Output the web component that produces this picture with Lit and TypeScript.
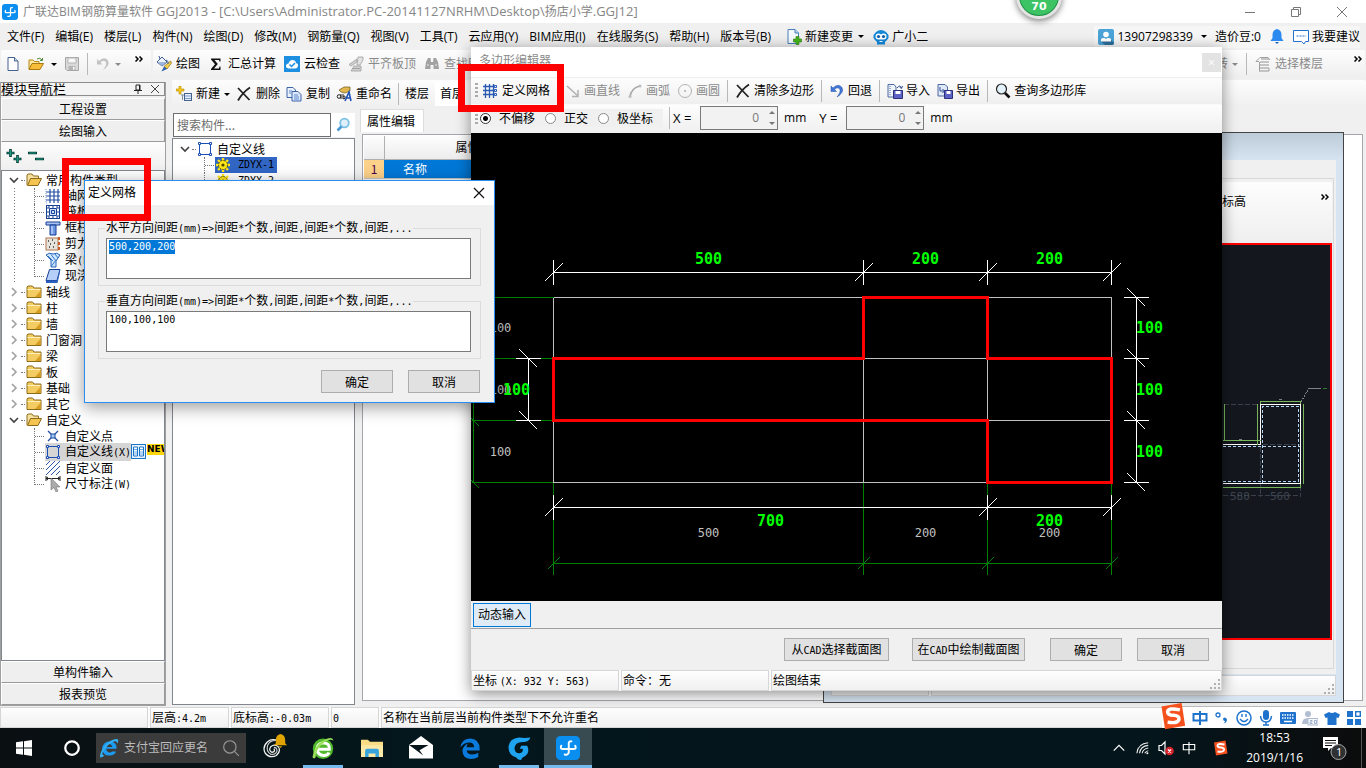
import { LitElement, html, svg, css, nothing, TemplateResult } from "lit";
import { customElement, query, state } from "lit/decorators.js";
import { classMap } from "lit/directives/class-map.js";

type Art = ReturnType<typeof svg>;

const pic = (art: Art, w = 16, h = w, box = "0 0 16 16") =>
  html`<svg class="pic" width=${w} height=${h} viewBox=${box} aria-hidden="true">${art}</svg>`;

/** Mixed text: Latin runs are set in the half-width face. */
const mix = (text: string) =>
  text.split(/([\x21-\x7e][\x20-\x7e]*)/).map((part, i) =>
    i % 2 ? html`<span class="hw">${part}</span>` : part
  );

const ART: Record<string, Art> = {
  app: svg`<rect width="16" height="16" rx="3" fill="#0a8ef0"/><path d="M8.500 11.200V5Q8.500 3.300 10.300 3.600M3.500 6.500Q2.500 8.700 4.700 8.700H12Q13.800 8.500 12.800 6.500M8.500 10.500Q8.300 13 5.800 12.300" fill="none" stroke="#fff" stroke-width="1.300" stroke-linecap="round"/>`,
  page: svg`<path d="M3 1.500H9.500L13 5V14.500H3Z" fill="#fff" stroke="#44618f"/><path d="M9.500 1.500V5H13" fill="#cfe0f5" stroke="#44618f"/>`,
  open: svg`<path d="M1 13V4H5L6.500 5.500H11V8" fill="#ffe9a0" stroke="#b98714"/><path d="M1 13.500L4 7.500H15.500L12 13.500Z" fill="#f6bd3b" stroke="#a97a10"/><path d="M9 3Q12 1 14 4M14.500 2V4.500H12" fill="none" stroke="#4a8d3a"/>`,
  save: svg`<path d="M1.500 1.500H14.500V14.500H3L1.500 13Z" fill="#d9d9d9" stroke="#a7a7a7"/><path d="M4 2H12V7H4Z" fill="#f8f8f8" stroke="#b4b4b4"/><path d="M4.500 10H11.500V14H4.500Z" fill="#b4b4b4"/><path d="M9 11H10.500V13.500H9Z" fill="#fff"/>`,
  undoGrey: svg`<path d="M2 3V8.500H7.500L5.500 6.500Q8 3.500 10.500 5.500Q12.500 8.500 8 14Q15.500 9.500 13 4.500Q9 0 4 5Z" fill="#c3c3c3"/>`,
  undo: svg`<path d="M2 3V8.500H7.500L5.500 6.500Q8 3.500 10.500 5.500Q12.500 8.500 8 14Q15.500 9.500 13 4.500Q9 0 4 5Z" fill="#4077d8" stroke="#2450a4" stroke-width=".5"/>`,
  paint: svg`<path d="M1 6L6 1L11 6L6 10Z" fill="#eef3fb" stroke="#3f5f94"/><path d="M2 6H10L6 10Z" fill="#9bb7df"/><path d="M4 3L3 0" stroke="#3f5f94"/><path d="M14.500 5L8 10.500L11 13L15.500 7Z" fill="#f1cf4d" stroke="#8a6b16" stroke-width=".7"/><path d="M8 10.500L5.500 15.500L11 13Z" fill="#2d5fae"/><path d="M10 4Q13 5 12 8" stroke="#3f5f94" fill="none"/>`,
  sigma: svg`<path d="M3 2.500H12.500V5.500H11.500L11 4H6.500L9.800 8L6 12.500H11L11.500 10.500H12.500V14H3V13L7 8.300L3 3.500Z" fill="#111"/>`,
  cloud: svg`<rect width="16" height="16" fill="#1c8fe0"/><path d="M4.500 12.500Q1.500 12 2 9.300Q2.500 7.500 4.500 7.500Q5.500 4 8.500 4Q11.500 4 12 7Q14.500 7.500 14 10Q13.500 12.500 11 12.500Z" fill="#fff"/><path d="M5.500 8.500L7.500 10.500L11 7" fill="none" stroke="#1c8fe0" stroke-width="1.500"/>`,
  align: svg`<path d="M1 8.500L9 3V6L3 10ZM6 10H13V15H3Z" fill="#d0d0d0" stroke="#a0a0a0" stroke-width=".8"/><path d="M10 1H15V4L12 9H9Z" fill="#e2e2e2" stroke="#a0a0a0" stroke-width=".8"/><path d="M5 12.500H12" stroke="#a0a0a0"/>`,
  find: svg`<path d="M2 6L4 2H6.500L7 6H9L9.500 2H12L14 6L15 13H9.500V9H6.500V13H1Z" fill="#a2a2a2"/><path d="M3 9H5M11 9H13" stroke="#e9e9e9"/>`,
  stack: svg`<path d="M6 3H14M5 6H14M4 9H14M4 12H14M4 15H14" stroke="#b4b4b4" stroke-width="1.600"/><path d="M5 1.500H13L15 4M1 5.500L5 1.500M1 5.500H4M4.500 6V15M14 12V15" fill="none" stroke="#a0a0a0"/>`,
  pageAdd: svg`<path d="M2 .5H9L12.500 4V14.500H2Z" fill="#f5faff" stroke="#4a7fb8"/><path d="M9 .5V4H12.500" fill="#bcdcf5" stroke="#4a7fb8"/><path d="M10 7.500H13V10H15.500V13H13V15.500H10V13H7.500V10H10Z" fill="#46b51d" stroke="#2d7c12" stroke-width=".6"/>`,
  robot: svg`<path d="M3 3Q8 -1 13 3L15.500 6V9L14 11L12 13V15.500H4V13L2 11L.5 9V6Z" fill="#1488d8"/><path d="M2.500 7.500Q2.500 4.500 5.500 4.500Q7 4.500 8 5.500Q9 4.500 10.500 4.500Q13.500 4.500 13.500 7.500Q13.500 10.500 10.500 10.500H5.500Q2.500 10.500 2.500 7.500Z" fill="#fff"/><circle cx="5.500" cy="7.500" r="1.600" fill="#0f5fa8"/><circle cx="10.500" cy="7.500" r="1.600" fill="#0f5fa8"/><path d="M6.500 12.500H9.500" stroke="#fff"/>`,
  user: svg`<rect width="16" height="16" rx="2" fill="#4ba3d8"/><path d="M13 11L16 13.500V14Q16 16 14 16H7L3 12.500Z" fill="#2d6f9b"/><circle cx="8" cy="5.500" r="2.800" fill="#fff"/><path d="M3 12.500V10.500Q3 9 5 9H6.500L8 10L9.500 9H11Q13 9 13 10.500V12.500Z" fill="#fff"/>`,
  bell: svg`<path d="M8 0Q12.500 1 12.500 6V9L14.500 12H1.500L3.500 9V6Q3.500 1 8 0Z" fill="#2a8af0"/><path d="M6 13H10L8 15Z" fill="#1b62b8"/>`,
  bubble: svg`<path d="M.5 1.500H15.500V12.500H12.500L11 15L8.500 12.500H.5Z" fill="#fff" stroke="#2470d0"/><path d="M3.500 7H13" stroke="#2470d0" stroke-dasharray="2 1"/>`,
  add: svg`<path d="M3 0H5V3H8V5H5V8H3V5H0V3H3Z" fill="#ffc91c" stroke="#b38a00" stroke-width=".6"/><path d="M5 9H8M6.500 9V14" stroke="#7c8ca5" fill="none"/><rect x="8.500" y="7.500" width="7" height="7" fill="#e7effc" stroke="#44618f"/><path d="M9 10H15M9 12.500H15" stroke="#7b9acb"/>`,
  cross: svg`<path d="M2 2L13.500 14M14 1.500Q7 6 2 14.500" fill="none" stroke="#222" stroke-width="1.800"/>`,
  copy: svg`<path d="M1 1.500H7L9.500 4V11.500H1Z" fill="#eaf2ff" stroke="#3d62a8"/><path d="M6 5.500H12L15 8.500V15H6Z" fill="#dbe8ff" stroke="#3d62a8"/><path d="M8 9H12M8 11H13M8 13H13M3 5H6M3 7H5" stroke="#5c86cc"/>`,
  rename: svg`<path d="M3 4L8 1H14V5L9 7L5 6Z" fill="#e1b64c" stroke="#6f5a1c" stroke-width=".7"/><circle cx="3" cy="10.500" r="1.800" fill="none" stroke="#222"/><path d="M5 8V13M7 8V13M7 10.500Q9.500 9 9 12Q8 13.500 7 12.500" fill="none" stroke="#222"/><path d="M9 15L13 6L15 15M10 12H14.500" fill="none" stroke="#1f52b5" stroke-width="1.600"/>`,
  lens: svg`<circle cx="6.500" cy="6" r="5" fill="#e4f2fb" stroke="#222" stroke-width="1.200"/><path d="M10 10L14.500 14.500" stroke="#111" stroke-width="2.600"/>`,
  search: svg`<circle cx="9.500" cy="6" r="4.300" fill="#dff0fa" stroke="#7cc0e6" stroke-width="1.800"/><path d="M6.500 9.500L2.500 13.500" stroke="#4c9bd4" stroke-width="2.600"/>`,
  grid: svg`<path d="M3.500 1V15M7.500 1V15M11.500 1V15M1 3.500H13M1 7.500H13M1 11.500H13" stroke="#2a5bb2" stroke-width="1.300"/><path d="M12.500 2.500H14.500V4.500H12.500ZM12.500 6.500H14.500V8.500H12.500ZM12.500 10.500H14.500V12.500H12.500Z" fill="#fff" stroke="#2a5bb2"/>`,
  line: svg`<path d="M2 3L13 13M13 7V13.500H7" fill="none" stroke="#b1b1b1" stroke-width="1.500"/>`,
  arc: svg`<path d="M3 14Q4 5 13 3" fill="none" stroke="#a7a7a7" stroke-width="1.500"/><circle cx="3" cy="13.500" r="1.500" fill="#bbb"/><circle cx="13" cy="3" r="1.500" fill="#bbb"/>`,
  circle: svg`<circle cx="8" cy="8" r="6.500" fill="none" stroke="#b1b1b1"/><circle cx="8" cy="8" r="1" fill="#b1b1b1"/>`,
  importer: svg`<path d="M1 1.500H7L9 4V14H1Z" fill="#eef3fc" stroke="#4c68a0"/><path d="M3 3V12" stroke="#4c68a0" stroke-dasharray="1 1"/><path d="M6.500 7.500H15.500V15.500H6.500Z" fill="#5b62c4" stroke="#2c2f7a"/><path d="M8.500 8H13.500V11H8.500Z" fill="#fff"/><path d="M10 5Q13 1 14.500 5M15.500 3L14.500 5.500L12.500 4" fill="none" stroke="#2f4f90"/>`,
  exporter: svg`<path d="M1 1.500H8L10.500 4V13H1Z" fill="#dfe8f8" stroke="#4c68a0"/><path d="M3 4V8H7M5.500 6L7.500 8L5.500 10" fill="none" stroke="#2f4f90"/><path d="M7.500 7.500H15.500V15.500H7.500Z" fill="#5b62c4" stroke="#2c2f7a"/><path d="M9.500 8H13.500V11H9.500Z" fill="#fff"/>`,
  folder: svg`<path d="M1 13.500V3L2 2H6.500L8 4H15V13.500Z" fill="#f3cd62" stroke="#8c6a1a"/><path d="M1.500 5.500H14.500" stroke="#fff1bd"/><path d="M9 13L14.500 7V13Z" fill="#d99d22"/>`,
  folderOpen: svg`<path d="M1 13V3L2 2H6L7.500 4H12.500V6.500" fill="#f6e2a0" stroke="#8c6a1a"/><path d="M1.500 13.500L4.500 6.500H15.500L12 13.500Z" fill="#f3c550" stroke="#8c6a1a"/>`,
  axis: svg`<path d="M5 1V15M9 1V15M13 1V15M1 4H15M1 8H15M1 12H15" stroke="#244ea0" stroke-width="1.200"/><path d="M1 1V15H3" fill="none" stroke="#7c9bd4" stroke-dasharray="1 1"/>`,
  raft: svg`<rect x="1.500" y="1.500" width="13" height="13" fill="#fff" stroke="#173f93"/><path d="M4.500 4.500H11.500V11.500H4.500Z" fill="#cfe0fb" stroke="#173f93"/><path d="M6.500 6.500H9.500V9.500H6.500ZM1.500 4H4M1.500 8H4M1.500 12H4M12 4H14M12 8H14M12 12H14M4 2V4M8 2V4M12 2V4M4 12V14M8 12V14M12 12V14" fill="none" stroke="#173f93"/>`,
  column: svg`<path d="M1 2H15V5H1Z" fill="#aac4f2" stroke="#173f93"/><path d="M5 5H11V15H5Z" fill="#6e98e6" stroke="#173f93"/><path d="M7 6V14" stroke="#dce9ff"/>`,
  wall: svg`<rect x="1" y="2" width="12" height="12" fill="#e6e2dc" stroke="#b0764e"/><path d="M3 5H4M7 4H8M5 8H6M9 7H10M4 11H5M8 11H9" stroke="#333" stroke-width="1.400"/><path d="M14 1V15" stroke="#c85b2c" stroke-dasharray="3 2" stroke-width="2"/>`,
  beam: svg`<path d="M1 3Q4 0 8 2Q12 0 15 3L11 9V15H6V8Z" fill="#cfe3fb" stroke="#2463b8"/><path d="M3 4L8 9M6 2.500L11 9M10 2L13 6M6.500 14L11 8" stroke="#2f7cd2"/>`,
  slab: svg`<path d="M4.500 1.500H15L12 12.500H1Z" fill="#b5cff8" stroke="#173f93"/><path d="M1 12.500H12L15 1.500V4L12.500 15H1Z" fill="#2c5fc0"/>`,
  point: svg`<path d="M3 3L6.500 6.500M13 3L9.500 6.500M3 13L6.500 9.500M13 13L9.500 9.500" stroke="#244ea0" stroke-width="1.300"/><rect x="6" y="6" width="4" height="4" fill="#9fc8f5" stroke="#244ea0"/>`,
  box: svg`<rect x="2.500" y="2.500" width="11" height="11" fill="none" stroke="#1a4fb5"/><path d="M1.500 1.500H3.500V3.500H1.500ZM12.500 1.500H14.500V3.500H12.500ZM1.500 12.500H3.500V14.500H1.500ZM12.500 12.500H14.500V14.500H12.500Z" fill="#fff" stroke="#1a4fb5"/>`,
  hatch: svg`<path d="M1 5L5 1M1 10L10 1M1 15L15 1M6 15L15 6M11 15L15 11" stroke="#2a56ad"/>`,
  dims: svg`<path d="M1 0V5M15 0V5M1 2.500H15M3 1L1 2.500L3 4M13 1L15 2.500L13 4" stroke="#222" fill="none"/><path d="M6 2V14L9 11.500L11 16L13 15L11 11H15Z" fill="#ababab" stroke="#777" stroke-width=".6"/>`,
  gear: svg`<path d="M8 1V15M1 8H15M3 3L13 13M13 3L3 13" stroke="#ffe71a" stroke-width="2.400"/><circle cx="8" cy="8" r="4.500" fill="#ffe71a" stroke="#5d5300" stroke-dasharray="2 1"/><circle cx="8" cy="8" r="1.600" fill="#4d4400"/>`,
  book: svg`<rect x=".5" y=".5" width="14" height="14" fill="#e8f3ff" stroke="#1c74c8"/><path d="M2.500 3H6.500V12H2.500ZM8.500 3H12.500V12H8.500Z" fill="#fff" stroke="#1c74c8"/><path d="M3 5.500H6M3 8H6M3 10H6M9 5.500H12M9 8H12M9 10H12" stroke="#67a8e8"/>`,
  sogou: svg`<path d="M2 2.500L13.500 .5L15.500 13.500L4 15.500Z" fill="#f4511e"/><path d="M12.500 4.500Q6 3 5.500 5.500Q5.500 7.500 9 7.500Q12.500 8 12 10Q11 12.500 5.500 11.500" fill="none" stroke="#fff" stroke-width="2"/>`,
  zhong: svg`<path d="M1.500 4H14.500V10.500H1.500ZM8 1V15" fill="none" stroke="currentColor" stroke-width="2"/>`,
  zhongThin: svg`<path d="M1.500 4H14.500V10H1.500ZM8 1V15" fill="none" stroke="currentColor" stroke-width="1.300"/>`,
  comma: svg`<circle cx="4" cy="5" r="2" fill="none" stroke="currentColor" stroke-width="1.300"/><path d="M9 9Q9 7.500 11 7.500Q13 8 13 10Q12.500 13 9.500 13.500Q11 12 11 11Q9 11 9 9Z" fill="currentColor"/>`,
  smile: svg`<circle cx="8" cy="8" r="7" fill="none" stroke="currentColor" stroke-width="1.500"/><path d="M6 4V7M10 4V7M4 9Q8 14 12 9" fill="none" stroke="currentColor" stroke-width="1.400"/>`,
  mic: svg`<rect x="5" y="0" width="6" height="10" rx="3" fill="currentColor"/><path d="M2.500 6Q3 12 8 12Q13 12 13.500 6M8 12V15M5 15H11" fill="none" stroke="currentColor" stroke-width="1.500"/>`,
  keys: svg`<rect x="0" y="2" width="16" height="12" rx="1" fill="currentColor"/><path d="M2 5H14M2 8H14" stroke="#fff" stroke-width="1.500" stroke-dasharray="1.500 1"/><path d="M4 11.500H12" stroke="#fff" stroke-width="1.500"/>`,
  person: svg`<circle cx="6" cy="4" r="3" fill="#b0bdd2"/><path d="M0 14Q0 8 6 8Q12 8 12 14Z" fill="#b0bdd2"/><rect x="6" y="8.500" width="10" height="6.500" fill="#f4f7fc" stroke="#b0bdd2"/><path d="M8 10.500H10V12H8V13.500H10.500M12.500 10.500H14.500V13.500H12.500Z" fill="none" stroke="#9fb0cc"/>`,
  shirt: svg`<path d="M5 2Q8 4 11 2L16 4.500L14.500 8L12.500 7.500V15H3.500V7.500L1.500 8L0 4.500Z" fill="currentColor"/>`,
  tiles: svg`<path d="M1 1H7V7H1ZM1 9H7V15H1ZM9 9H15V15H9Z" fill="currentColor"/><rect x="9.700" y="1.700" width="4.600" height="4.600" fill="none" stroke="currentColor" stroke-width="1.400"/>`,
  windows: svg`<path d="M0 2.300L7 1.300V7.500H0ZM8 1.200L16 0V7.500H8ZM0 8.500H7V14.700L0 13.700ZM8 8.500H16V16L8 14.800Z" fill="#fff"/>`,
  ring: svg`<circle cx="8" cy="8" r="6" fill="none" stroke="#fff" stroke-width="2"/>`,
  ie: svg`<path d="M4.500 8.500H14Q14.500 3 8.500 2.500Q3 3 2.500 8.500Q3 14 8.500 14Q12.500 14 13.700 10.800H10.500Q9.500 12 8 11.500Q6 11 5.700 8.500" fill="#1d9bf0"/><path d="M6 7.200H10.800Q10 4.800 8.300 4.800Q6.400 5 6 7.200Z" fill="#3a3a3a"/><path d="M1 15.500Q0 12 5 6Q11 0 15 1Q16 2 14.500 4.500Q14.500 2 12 2.800Q7 4.500 3 11Q2 14 4.500 14Q2 16 1 15.500Z" fill="#36b0f5"/>`,
  swirl: svg`<path d="M13 2.500Q8 0 4.500 3Q0 7 2.500 12Q6 16.500 11.500 14Q15.500 10.500 13 7Q10 4.500 7 7Q5 10 8 11.500Q11 11 9.500 8.500" fill="none" stroke="#f2f2f2" stroke-width="1"/><path d="M11 2Q6 2 4.500 6Q3 10.500 7 13Q11 13.500 12 10.500Q12 7.500 9.500 7.500" fill="none" stroke="#d0d0d0" stroke-width=".9"/>`,
  tinyBell: svg`<path d="M8 1Q13 2 13 8V11L15 13H1L3 11V8Q3 2 8 1Z" fill="#e0a400"/><path d="M6 14H10L8 16Z" fill="#e0a400"/>`,
  greenE: svg`<circle cx="8" cy="8.500" r="6.800" fill="#4fb82b"/><path d="M4 8.800H12.200Q12.500 4.800 8.300 4.500Q4.300 4.700 4 8.800Q4.500 12.800 8.500 13Q11.200 13 12 11" fill="none" stroke="#fff" stroke-width="2"/><path d="M1 14Q2 6 9 2.500Q14 0 15 3Q12 1.500 8 5Q3 9 3 14.500Q1.500 15.500 1 14Z" fill="#9be05a"/>`,
  explorer: svg`<path d="M0 2H5L6.500 3.500H16V14.500H0Z" fill="#f9dc83"/><path d="M0 6H16V14.500H0Z" fill="#fde9a6"/><path d="M3 14.500V10Q3 8.500 4.500 8.500H11.500Q13 8.500 13 10V14.500H10.500V12H5.500V14.500Z" fill="#36a3dd"/>`,
  mail: svg`<path d="M0 6L8 0L16 6V15H0Z" fill="#fff"/><path d="M0 6L13 6L7 9.500L9.500 13L3.500 8.500Z" fill="#06151b"/>`,
  edge: svg`<path d="M1 7.500Q2 1 8.500 1Q15 1.500 15 8.500V9.800H5.500Q6 12.800 9.500 12.800Q12.500 12.800 14 11.500V14.500Q12 16 8.500 16Q2.500 15.500 2.500 9.800Q3 6.500 6.500 4.800Q5.500 6 5.500 7.500H11Q11 4 7.500 4Q3.500 4 1 7.500Z" fill="#0a7bdc"/>`,
  dragon: svg`<path d="M15.500 1Q15 3.500 11.500 4Q5.500 3.500 5 8Q5 11.500 8.300 11.500Q11 11 10.500 8.500L8.500 8.500L9.500 6.500H13.500Q15.500 11 12 13.500Q9.500 14.500 9.500 16Q6.500 15.800 6.500 14.500Q1 13 1 7.500Q1.500 1.500 8 1Q12 1.500 15.500 1Z" fill="#1fa4f2"/>`,
  wifi: svg`<path d="M1 14Q2 3 14 2M4 14Q5 6 14 5M7 14Q8 9 14 8M10 14Q11 12 14 11" fill="none" stroke="#eee" stroke-width="1.200"/><path d="M12 13H14V15H12Z" fill="#fff"/>`,
  mute: svg`<path d="M1 5.500H3.500L7 2V14L3.500 10.500H1Z" fill="none" stroke="#fff" stroke-width="1.200"/><circle cx="11.500" cy="11" r="4.300" fill="#d8232c"/><path d="M10 9.500L13 12.500M13 9.500L10 12.500" stroke="#fff" stroke-width="1.200"/>`,
  up: svg`<path d="M2 11L8 5L14 11" fill="none" stroke="#fff" stroke-width="1.400"/>`,
};

const icon = (name: string, size = 16) => pic(ART[name], size);
const arrow = () => html`<span class="arrow"></span>`;
const more = () => html`<span class="more">${pic(svg`<path d="M.5 .5L3 3L.5 5.500M4.500 .5L7 3L4.500 5.500" fill="none" stroke="#000" stroke-width="1.500"/>`, 8, 6, "0 0 8 6")}</span>`;

const MENU = ["文件(F)", "编辑(E)", "楼层(L)", "构件(N)", "绘图(D)", "修改(M)", "钢筋量(Q)", "视图(V)", "工具(T)",
  "云应用(Y)", "BIM应用(I)", "在线服务(S)", "帮助(H)", "版本号(B)"];

interface Leaf { art: string; label: string; tag?: boolean }
interface Branch { label: string; leaves?: Leaf[]; rail?: boolean }

const MODULES: Branch[] = [
  { label: "常用构件类型", rail: true, leaves: [
    { art: "axis", label: "轴网(J)" }, { art: "raft", label: "筏板基础(M)" }, { art: "column", label: "框柱(Z)" },
    { art: "wall", label: "剪力墙(Q)" }, { art: "beam", label: "梁(L)" }, { art: "slab", label: "现浇板(B)" }] },
  { label: "轴线" }, { label: "柱" }, { label: "墙" }, { label: "门窗洞" }, { label: "梁" },
  { label: "板" }, { label: "基础" }, { label: "其它" },
  { label: "自定义", leaves: [
    { art: "point", label: "自定义点" }, { art: "box", label: "自定义线(X)", tag: true },
    { art: "hatch", label: "自定义面" }, { art: "dims", label: "尺寸标注(W)" }] },
];

const COLS = [553, 863, 987, 1111];
const ROWS = [297, 358, 420, 482];

const slash = (x: number, y: number, r: number, c: string) =>
  svg`<path class=${c} d="M${x - r} ${y + r}L${x + r} ${y - r}"/>`;
const back = (x: number, y: number, r: number, c: string) =>
  svg`<path class=${c} d="M${x - r} ${y - r}L${x + r} ${y + r}"/>`;

const dimH = (xs: number[], y: number) => svg`
  <path class="w" d="M${xs[0]} ${y}H${xs[xs.length - 1]}"/>
  ${xs.map((x) => svg`<path class="w" d="M${x} ${y - 13}V${y + 12}"/>${slash(x, y, 9, "w")}`)}`;
const dimV = (x: number, ys: number[]) => svg`
  <path class="w" d="M${x} ${ys[0]}V${ys[ys.length - 1]}"/>
  ${ys.map((y) => svg`<path class="w" d="M${x - 13} ${y}H${x + 12}"/>${back(x, y, 9, "w")}`)}`;
const big = (x: number, y: number, t: string) => svg`<text class="big" x=${x} y=${y}>${t}</text>`;
const small = (x: number, y: number, t: string) => svg`<text class="small" x=${x} y=${y}>${t}</text>`;

@customElement("app-root")
export class AppRoot extends LitElement {
  @state() private mode = "不偏移";
  @query("#horizontal") private horizontal!: HTMLTextAreaElement;

  protected firstUpdated() {
    this.horizontal.focus({ preventScroll: true });
    this.horizontal.select();
  }

  static styles = css`
    :host { display: flex; flex-direction: column; position: relative; height: 100vh; overflow: hidden;
      background: #f0f0f0; color: #000; font: 12px/16px "Open Sans", "Noto Sans CJK SC", sans-serif; white-space: nowrap; }
    * { box-sizing: border-box; }
    button, input, textarea { font: inherit; color: inherit; margin: 0; padding: 0; border: 0; border-radius: 0; background: none; }
    .pic { flex: none; display: block; }
    .sun { font-family: "Noto Sans CJK SC", sans-serif; }
    .hw { font-family: "DejaVu Sans Mono", monospace; font-size: 10px; white-space: pre; }
    .push { margin-left: auto; }
    .arrow { width: 0; height: 0; border: 3px solid transparent; border-top-color: currentColor; border-bottom: 0; flex: none; }
    .more { align-self: flex-start; }
    .sep { width: 1px; height: 22px; background: #b8b8b8; flex: none; }
    .grip { width: 3px; height: 16px; flex: none; background: repeating-linear-gradient(#aaa 0 2px, transparent 2px 4px); }
    .grey { color: #8a8a8a; }
    .bar { display: flex; align-items: center; background: linear-gradient(#fdfdfd, #efefef); border-radius: 2px; }
    .tool { display: flex; align-items: center; gap: 4px; height: 22px; flex: none; }

    .title { display: flex; align-items: center; gap: 5px; height: 23px; padding: 0 16px 0 2px; background: #fff; color: #868686; flex: none; }
    .title h1 { font: inherit; margin: 0; }
    .title .path { font-size: 13px; }
    .title .cn { font-size: 12px; }
    .caps { display: flex; gap: 30px; margin-left: auto; }
    .menu { display: flex; align-items: center; gap: 11px; height: 27px; padding: 0 6px 0 7px; flex: none; }
    .menu .tool { gap: 3px; }
    .menu > .tool { padding-left: 4px; }
    .menu > .arrow { margin: 0 -6px; }
    .account { display: flex; align-items: center; gap: 8px; margin-left: auto; padding-left: 4px; height: 22px; background: #f6f6f6; }
    .bars { display: flex; gap: 2px; padding: 0 1px; height: 28px; flex: none; }
    .quick { width: 150px; gap: 7px; padding: 0 8px 0 4px; }
    .quick .more, .main .more { padding-top: 6px; }
    .main { flex: 1; gap: 8px; padding: 0 3px 0 3px; }
    .main .more { margin-left: 23px; }

    .work { display: flex; flex: 1; min-height: 0; padding-top: 2px; }
    .dock { width: 166px; flex: none; display: flex; flex-direction: column; margin-top: 2px; border: 1px solid #a0a0a0; border-width: 0 1px 1px; }
    .dock header { display: flex; align-items: center; height: 14px; border: 1px solid #8c8c8c; border-left: 0; gap: 7px; padding-right: 4px; background: #f4f4f4; margin-bottom: 2px; font-size: 13px; }
    .dock header span { margin-right: auto; }
    .slot { height: 22px; flex: none; border: 1px solid #9a9a9a; border-top-color: #fff; border-left-color: #fff; text-align: center; background: #efefef; }
    .sizers { display: flex; gap: 6px; align-items: center; height: 28px; padding-left: 5px; background: linear-gradient(#fdfdfd, #efefef); flex: none; }
    .tree { flex: 1; border: 1px solid #82868e; background: #fff; margin: 0; padding: 1px 0 0; list-style: none; overflow: hidden; position: relative; min-height: 0; }
    .tree ul { list-style: none; margin: 0; padding: 0 0 0 32px; }
    .node { display: flex; align-items: center; height: 16px; }
    .chev { width: 10px; margin: 0 2px 0 7px; }
    .stub { width: 4px; margin-right: 1px; border-top: 1px dotted #777; flex: none; }
    .node .pic + span { margin-left: 4px; }
    .leaf { display: flex; align-items: center; height: 16px; }
    .leaf i { align-self: stretch; width: 11px; flex: none; border-left: 1px dotted #777; background: repeating-linear-gradient(90deg, #777 0 1px, transparent 1px 2px) 0 8px / 10px 1px no-repeat; }
    .leaf:last-child i { height: 9px; align-self: flex-start; }
    .leaf span { margin-left: 4px; }
    .leaf span .hw { margin: 0; }
    .rail { background: repeating-linear-gradient(#777 0 1px, transparent 1px 3px) 12px 0 / 1px 100% no-repeat; }
    .chosen { display: flex; align-items: center; background: #d5d5d5; }
    .new { background: #ffd60a; font: 700 9px/11px "DejaVu Sans", sans-serif; align-self: flex-start; }

    .right { flex: 1; display: flex; flex-direction: column; min-width: 0; margin-left: 6px; }
    .sub { height: 28px; flex: none; gap: 6px; padding: 0 4px; }
    .sub b { font-weight: 400; background: #fff; padding: 4px 40px 4px 5px; }
    .panes { display: flex; flex: 1; gap: 5px; min-height: 0; }
    .parts { width: 183px; display: flex; flex-direction: column; flex: none; padding-bottom: 1px; }
    .lookup { display: flex; height: 24px; margin: 5px 0 1px 1px; background: #fff; flex: none; }
    .lookup input { flex: 1; min-width: 0; border: 1px solid #6f6f6f; padding-left: 3px; background: #fff; }
    .lookup input::placeholder { color: #6d6d6d; opacity: 1; }
    .lookup button { width: 24px; display: grid; place-items: center; }
    .parts .tree { padding-top: 2px; }
    .parts .tree ul { padding-left: 31px; }
    .hot { background: #3166c5; padding-right: 3px; display: flex; align-items: center; }
    .hot span { margin-left: 7px; font-family: "DejaVu Sans Mono", monospace; font-size: 10px; }
    .plain { background: none; }
    .props { flex: 1; display: flex; flex-direction: column; margin: 1px 3px 2px 0; min-width: 0; }
    .tab { align-self: flex-start; height: 23px; padding: 1px 8px 0 6px; background: #fff; border: 1px solid #dcdcdc; border-bottom: 0; }
    .sheet { flex: 1; margin: 2px 0 3px 2px; border: 1px solid #a5a5ac; background: #fff; padding: 1px; min-height: 0; }
    .sheet table { border-collapse: collapse; width: 60%; table-layout: fixed; }
    .sheet th { font-weight: 400; height: 23px; padding: 0; background: linear-gradient(#fdfdfd, #ececec); border-right: 1px solid #b0b0b0; border-bottom: 1px solid #b0b0b0; text-align: left; }
    .sheet th + th { padding-left: 71px; }
    .sheet td { height: 19px; padding: 0; background: #0078d7; color: #fff; border-bottom: 1px solid #c8c8c8; padding-left: 19px; }
    .sheet td:first-child { background: #fcd28a; color: #4a004a; text-align: center; padding: 0; }
    .idx { width: 20px; }

    .status { display: flex; gap: 2px; height: 21px; flex: none; margin-top: 1px; background: #fbfbfb; font-size: 12px; }
    .cell { border: 1px solid #d6d6d6; background: linear-gradient(#fefefe, #f0f0f0); padding: 0 1px; line-height: 18px; flex: none; overflow: hidden; }
    .grow { flex: 1; }
    .w78 { width: 79px; } .w98 { width: 98px; } .w148 { width: 148px; } .w48 { width: 48px; }
    .corner { position: relative; }
    .corner::after { content: ""; position: absolute; right: 1px; bottom: 1px; width: 10px; height: 10px;
      background: conic-gradient(from 90deg at 2px 2px, transparent 50%, #b0b0b0 0 75%, transparent 0) 0 0 / 4px 4px; clip-path: polygon(100% 0, 100% 100%, 0 100%, 0 80%, 80% 0); }

    .task { display: flex; align-items: center; height: 40px; flex: none; background: linear-gradient(90deg, #0a0f12, #04171c 30%, #04151b 85%, #0c0c0c); color: #fff; }
    .task button { display: grid; place-items: center; height: 40px; width: 48px; flex: none; }
    .ask { display: flex; align-items: center; gap: 5px; width: 150px; height: 30px; padding: 0 6px 0 3px; background: #3b3b3b; flex: none; }
    .ask input { flex: 1; min-width: 0; color: #bbb; }
    .ask input::placeholder { color: #bbb; opacity: 1; }
    .apps { display: flex; gap: 1px; }
    .task .run, .task .front { box-shadow: inset 0 -3px #76b9ed; }
    .apps .run { width: 40px; margin: 0 4px; }
    .task .front { background: #374b51; }
    .task .badge { position: relative; width: 52px; }
    .badge .pic + .pic { position: absolute; right: 10px; top: 5px; }
    .tray { display: flex; align-items: center; gap: 8px; margin-left: auto; }
    .tray .pic:first-child { margin-right: 2px; }
    .clock { text-align: center; line-height: 20px; font-size: 12px; padding: 0 11px 0 10px; }
    .note { position: relative; margin-right: 4px; }
    .edge { width: 1px; height: 40px; background: #555; margin-right: 4px; }

    .win { position: absolute; display: flex; flex-direction: column; background: #f0f0f0; }
    .cad { left: 823px; top: 132px; width: 521px; height: 571px; border: 1px solid #444; background: linear-gradient(#bdccd9, #d7e4f2 28px); padding: 27px 7px 6px; }
    .client { flex: 1; display: flex; flex-direction: column; background: #f0f0f0; padding: 18px 2px 5px; min-height: 0; }
    .inner { flex: 1; border: 2px solid #d8d8d8; border-width: 1px 1px 1px 1px; padding: 3px 1px; display: flex; flex-direction: column; min-height: 0; }
    .client .bar { height: 61px; flex: none; align-items: flex-start; justify-content: flex-end; padding: 12px 3px 0; }
    .client .bar .more { margin: 0 0 0 75px; }
    .model { flex: 1; min-height: 0; border: 2px solid #f00; background: #14171e; display: flex; justify-content: flex-end; margin-bottom: 25px; }

    .poly { left: 471px; top: 47px; width: 751px; height: 644px; box-shadow: 0 3px 14px rgba(0, 0, 0, .45); }
    .poly .top { height: 31px; background: #fff; display: flex; justify-content: space-between; padding: 6px 1px 0 8px; color: #8a8a8a; border-bottom: 1px solid #eee; flex: none; }
    .poly .top button { width: 19px; height: 19px; background: #e3e3e3; color: #fff; }
    .draw { height: 26px; gap: 7px; padding: 0 4px 0 4px; flex: none; }
    .draw .tool { gap: 3px; }
    .draw .grip + .tool { margin-left: -3px; gap: 4px; }
    .place { height: 29px; gap: 6px; padding: 0 4px 2px 4px; border-top: 1px solid #fafafa; flex: none; }
    .modes { display: flex; gap: 10px; background: #f0f0f0; padding-right: 10px; height: 18px; align-items: center; margin-left: -4px; }
    .modes label { display: flex; align-items: center; gap: 8px; }
    .modes input { appearance: none; width: 11px; height: 11px; border: 1px solid #888; border-radius: 50%; background: #fff; }
    .modes input:checked { background: radial-gradient(circle, #000 0 2px, #fff 3px); border-color: #333; }
    .place .sep { margin-right: -3px; }
    .num { display: flex; width: 78px; height: 24px; border: 1px solid #7a7a7a; background: #f2f2f2; }
    .num input { flex: 1; min-width: 0; text-align: right; color: #777; padding-right: 8px; }
    .spin { display: flex; flex-direction: column; justify-content: space-between; padding: 4px 2px; color: #777; }
    .spin .arrow:first-child { transform: rotate(180deg); }
    .place label[for] { width: 21px; font-size: 13px; }
    .unit { margin-right: 7px; }
    .space { flex: 1; min-height: 0; background: #000; display: block; width: 100%; }
    .space path { fill: none; shape-rendering: crispEdges; }
    .w { stroke: #fff; } .g { stroke: #008000; } .s { stroke: #c0c0c0; } .r { stroke: #f00; stroke-width: 3; }
    .big { font: 700 15px "DejaVu Sans Mono", monospace; fill: #0f0; text-anchor: middle; }
    .small { font: 12px "DejaVu Sans Mono", monospace; fill: #c0c0c0; text-anchor: middle; }
    .hint { height: 28px; padding: 2px; border-bottom: 1px solid #a0a0a0; flex: none; }
    .hint button { height: 24px; width: 58px; border: 1px solid #0078d7; background: #dfebf6; }
    .acts { display: flex; justify-content: flex-end; padding: 9px 13px 9px 0; gap: 15px; flex: none; }
    .push-btn { border: 1px solid #adadad; background: #e1e1e1; width: 72px; height: 23px; line-height: 20px; text-align: center; }
    .acts .wide { width: 105px; margin-right: 8px; }
    .acts .wider { width: 113px; margin-right: 10px; }
    .poly .status { margin: 0; }

    .dialog { left: 84px; top: 180px; width: 411px; height: 223px; border: 1px solid #2a8df0; box-shadow: 0 4px 16px rgba(0, 0, 0, .4); }
    .dialog .top { display: flex; justify-content: space-between; align-items: center; height: 24px; padding: 0 9px 0 3px; background: #fff; flex: none; }
    .dialog form { display: flex; flex-direction: column; padding: 15px 13px 0; gap: 7px; }
    fieldset { margin: 0; padding: 2px 9px 7px 7px; border: 1px solid #dcdcdc; min-width: 0; height: 66px; }
    legend { padding: 0 1px; margin-left: -1px; line-height: 14px; }
    textarea { display: block; width: 100%; height: 41px; resize: none; border: 1px solid #7a7a7a; background: #fff; outline: none; padding: 1px 2px; font: 10px/14px "DejaVu Sans Mono", monospace; }
    textarea::selection { background: #0078d7; color: #fff; }
    .reply { display: flex; justify-content: flex-end; gap: 15px; padding: 4px 1px 0 0; }

    .mark { position: absolute; border: 7px solid #f00; pointer-events: none; }
    .mark-a { left: 62px; top: 158px; width: 89px; height: 63px; }
    .mark-b { left: 458px; top: 64px; width: 106px; height: 48px; }
    .ball { position: absolute; left: 1016px; top: -27px; width: 46px; height: 46px; border-radius: 50%; border: 3px solid #e4e4e4; background: #3cc464; box-shadow: 0 2px 6px rgba(0, 0, 0, .5), inset 0 0 0 1px #258d49; color: #fff; font: 700 11px/14px "DejaVu Sans", sans-serif; text-align: center; padding-top: 24px; }
    .ime { position: absolute; right: 0; bottom: 40px; height: 22px; display: flex; align-items: center; gap: 6px; padding: 0 4px 0 30px; background: #fff; border-top: 1px solid #bbb; color: #1f73cc; }
    .ime > :first-child { position: absolute; left: -4px; top: -5px; }
  `;

  private tool(art: string, label: string, grey = false, drop = false) {
    return html`<button class=${classMap({ tool: true, grey })}>${icon(art)}<span>${label}</span>${drop ? arrow() : nothing}</button>`;
  }

  private chevron(open: boolean) {
    return html`<span class="chev">${pic(open
      ? svg`<path d="M1 3L5 7L9 3" fill="none" stroke="#404040" stroke-width="1.600"/>`
      : svg`<path d="M3 1L7 5L3 9" fill="none" stroke="#a0a0a0" stroke-width="1.600"/>`, 10, 10, "0 0 10 10")}</span>`;
  }

  private branch(b: Branch) {
    return html`<li>
      <div class="node">${this.chevron(!!b.leaves)}<i class="stub"></i>${icon(b.leaves ? "folderOpen" : "folder")}<span>${b.label}</span></div>
      ${b.leaves ? html`<ul class=${classMap({ rail: !!b.rail })}>${b.leaves.map((l) => html`<li class="leaf"><i></i>
        ${l.tag
          ? html`<div class="chosen">${icon(l.art)}<span>${mix(l.label)}</span></div>${icon("book")}<b class="new">NEW</b>`
          : html`${icon(l.art)}<span>${mix(l.label)}</span>`}</li>`)}</ul>` : nothing}
    </li>`;
  }

  private number(id: string, label: string) {
    return html`<label for=${id}>${label}</label>
      <div class="num"><input id=${id} value="0"><span class="spin">${arrow()}${arrow()}</span></div>
      <span class="unit">mm</span>`;
  }

  private model(): TemplateResult {
    return html`<svg class="pic" width="107" height="390" viewBox="1222 246 107 390" aria-hidden="true">
      <g fill="none" shape-rendering="crispEdges">
        <path d="M1223 405.500H1257M1259.500 448V498M1299.500 487V498M1222 496.500H1300M1262 445.500H1300" stroke="#3a4049" stroke-dasharray="5 2"/>
        <path d="M1222 445.500H1259.500V405.500H1299.500V484.500H1222" stroke="#fff"/>
        <path d="M1222 447.500H1299M1222 482.500H1297.500V407.500H1261.500V484" stroke="#b4d4f4" stroke-dasharray="3 2"/>
        <path d="M1223.500 405V441M1256.500 405V446M1222 441.500H1260M1259.500 405V402.500H1299.500V405M1302.500 405V485M1222 488.500H1299.500V485" stroke="#78b85a"/>
        <path d="M1300 403L1308 389" stroke="#7d8288" stroke-dasharray="2 1"/>
        <path d="M1308 389.500H1320M1278 400.500H1281M1238 440.500H1241" stroke="#7d8288"/>
        <path d="M1322 389.500H1326" stroke="#2c7a2c"/>
      </g>
      <g font-family="DejaVu Sans Mono" font-size="11" fill="#3f4651"><text x="1229" y="501">580</text><text x="1269" y="501">560</text></g>
    </svg>`;
  }

  private drawing() {
    return html`<svg class="space" viewBox="471 133 751 468" preserveAspectRatio="xMinYMin slice" role="img" aria-label="截面网格">
      <g transform="translate(.5 .5)">
        ${ROWS.map((y) => svg`<path class="g" d="M471 ${y}H553"/>`)}
        ${COLS.map((x) => svg`<path class="g" d="M${x} 482V574"/>${slash(x, 563, 6, "g")}`)}
        <path class="g" d="M553 563H1111M473 297V482"/>
        ${ROWS.map((y) => back(473, y, 6, "g"))}
        ${ROWS.map((y) => svg`<path class="s" d="M553 ${y}H1111"/>`)}
        ${COLS.map((x) => svg`<path class="s" d="M${x} 297V482"/>`)}
        ${small(500, 331, "100")}${small(500, 393, "100")}${small(500, 455, "100")}
        ${small(708, 536, "500")}${small(925, 536, "200")}${small(1049, 536, "200")}
        ${dimH(COLS, 272)}${dimH([553, 987, 1111], 507)}
        ${dimV(1136, ROWS)}${dimV(528, [358, 420])}
        <path class="r" d="M553 358H863V297H987V358H1111V482H987V420H553Z"/>
        ${big(708, 263, "500")}${big(925, 263, "200")}${big(1049, 263, "200")}
        ${big(770, 525, "700")}${big(1049, 525, "200")}
        ${big(1149, 332, "100")}${big(1149, 394, "100")}${big(1149, 456, "100")}${big(516, 394, "100")}
      </g>
    </svg>`;
  }

  render() {
    return html`
      <header class="title">${icon("app")}
        <h1>广联达BIM钢筋算量软件 <span class="path">GGJ2013 - [C:\\Users\\Administrator.PC-20141127NRHM\\Desktop\\<span class="cn">扬店小学</span>.GGJ12]</span></h1>
        <div class="caps">
          ${pic(svg`<path d="M3 8.500H13" stroke="#777"/>`)}
          ${pic(svg`<path d="M3.500 5.500H10.500V12.500H3.500ZM5.500 5V3.500H12.500V10.500H11" fill="none" stroke="#777"/>`)}
          ${pic(svg`<path d="M3 3L13 13M13 3L3 13" stroke="#777"/>`)}
        </div>
      </header>
      <nav class="menu">
        ${MENU.map((m) => html`<button>${m}</button>`)}
        <button class="tool">${icon("pageAdd")}新建变更</button>${arrow()}
        <button class="tool">${icon("robot")}广小二</button>
        <div class="account">
          <button class="tool">${icon("user")}<span>13907298339</span></button>${arrow()}<span>造价豆:0</span>
          ${icon("bell")}<button class="tool">${icon("bubble")}我要建议</button>
        </div>
      </nav>
      <div class="bars">
        <div class="bar quick">${icon("page")}${icon("open")}${arrow()}${icon("save")}<i class="sep"></i>
          <span class="tool grey">${icon("undoGrey")}${arrow()}</span><span class="push"></span>${more()}</div>
        <div class="bar main">${this.tool("paint", "绘图")}${this.tool("sigma", "汇总计算")}${this.tool("cloud", "云检查")}
          ${this.tool("align", "平齐板顶", true)}${this.tool("find", "查找图元", true)}
          <button class="tool grey push">旋转${arrow()}</button><i class="sep"></i>${this.tool("stack", "选择楼层", true)}${more()}</div>
      </div>

      <main class="work">
        <aside class="dock sun">
          <header><span>模块导航栏</span>
            ${pic(svg`<path d="M3 1H7V6H3ZM1 6.500H9M5 7V10M6.500 1V6" fill="none" stroke="#222"/>`, 10, 10, "0 0 10 10")}
            ${pic(svg`<path d="M1 1L9 9M9 1L1 9" stroke="#444"/>`, 10, 10, "0 0 10 10")}</header>
          <button class="slot">工程设置</button>
          <button class="slot">绘图输入</button>
          <div class="sizers">
            ${pic(svg`<path d="M4.500 1V9M.5 5H8.500M11.500 7V15M7.500 11H15.500" stroke="#063d36" stroke-width="2.600"/><path d="M4.500 2V8M1.500 5H7.500M11.500 8V14M8.500 11H14.500" stroke="#1c9c85"/>`)}
            ${pic(svg`<path d="M0 5H9M7 11H16" stroke="#063d36" stroke-width="2.600"/><path d="M1 5H8M8 11H15" stroke="#1c9c85"/>`)}
          </div>
          <ul class="tree">${MODULES.map((b) => this.branch(b))}</ul>
          <button class="slot">单构件输入</button>
          <button class="slot">报表预览</button>
        </aside>
        <section class="right">
          <div class="bar sub">${this.tool("add", "新建", false, true)}${this.tool("cross", "删除")}${this.tool("copy", "复制")}${this.tool("rename", "重命名")}
            <i class="sep"></i><span>楼层</span><b>首层</b></div>
          <div class="panes">
            <div class="parts">
              <div class="lookup sun"><input aria-label="搜索构件" placeholder="搜索构件..."><button aria-label="搜索">${icon("search")}</button></div>
              <ul class="tree sun"><li>
                <div class="node">${this.chevron(true)}<i class="stub"></i>${icon("box")}<span>自定义线</span></div>
                <ul>
                  <li class="leaf"><i></i><div class="hot">${icon("gear")}<span>ZDYX-1</span></div></li>
                  <li class="leaf"><i></i><div class="hot plain">${icon("gear")}<span>ZDYX-2</span></div></li>
                </ul></li></ul>
            </div>
            <div class="props">
              <button class="tab">属性编辑</button>
              <div class="sheet sun"><table>
                <thead><tr><th class="idx"></th><th>属性名称</th></tr></thead>
                <tbody><tr><td>1</td><td>名称</td></tr></tbody>
              </table></div>
            </div>
          </div>
        </section>
      </main>
      <footer class="status sun">
        <span class="cell w148"></span><span class="cell w78">${mix("层高:4.2m")}</span><span class="cell w98">${mix("底标高:-0.03m")}</span>
        <span class="cell w48">${mix("0")}</span><span class="cell grow">名称在当前层当前构件类型下不允许重名</span>
      </footer>
      <footer class="task">
        <button aria-label="开始">${icon("windows")}</button>
        <button aria-label="语音助手">${icon("ring", 18)}</button>
        <div class="ask">${icon("ie", 20)}<input aria-label="搜索" placeholder="支付宝回应更名">
          ${pic(svg`<circle cx="7" cy="7" r="5.500" fill="none" stroke="#999"/><path d="M11 11L15 15" stroke="#999"/>`, 18)}</div>
        <div class="apps">
          <button class="badge" aria-label="提醒">${icon("swirl", 20)}${icon("tinyBell", 15)}</button>
          <button class="run" aria-label="浏览器">${icon("greenE", 24)}</button>
          <button aria-label="文件">${icon("explorer", 22)}</button>
          <button aria-label="邮件">${icon("mail", 24)}</button>
          <button aria-label="网页">${icon("edge", 22)}</button>
          <button class="run" aria-label="广联达">${icon("dragon", 24)}</button>
          <button class="front" aria-label="算量">${icon("app", 24)}</button>
        </div>
        <div class="tray">${icon("up", 14)}${icon("wifi", 14)}${icon("mute")}${icon("zhongThin", 14)}<span></span>${icon("sogou")}
          <time class="clock">18:53<br>2019/1/16</time>
          <span class="note">${pic(svg`<path d="M1 1H16V12H9L6 15V12H1Z" fill="#fff"/><path d="M3 4.500H14M3 7H14M3 9.500H10" stroke="#111"/><circle cx="16.500" cy="16" r="7.500" fill="#2e3032" stroke="#a8a8a8"/><text x="14" y="20" font-size="11" font-family="Open Sans" fill="#fff">1</text>`, 25, 25, "0 0 25 25")}</span>
          <span class="edge"></span>
        </div>
      </footer>

      <section class="win cad">
        <div class="client"><div class="inner">
          <div class="bar"><span>提取标高</span>${more()}</div>
          <div class="model">${this.model()}</div>
        </div></div>
        <div class="status"><span class="cell w98"></span><span class="cell grow corner"></span></div>
      </section>

      <section class="win poly" aria-label="多边形编辑器">
        <div class="top"><span>多边形编辑器</span><button aria-label="关闭">×</button></div>
        <div class="bar draw"><i class="grip"></i>${this.tool("grid", "定义网格")}<i class="sep"></i>
          ${this.tool("line", "画直线", true)}${this.tool("arc", "画弧", true)}${this.tool("circle", "画圆", true)}<i class="sep"></i>
          ${this.tool("cross", "清除多边形")}<i class="sep"></i>${this.tool("undo", "回退")}<i class="sep"></i>
          ${this.tool("importer", "导入")}${this.tool("exporter", "导出")}<i class="sep"></i>${this.tool("lens", "查询多边形库")}</div>
        <div class="bar place"><i class="grip"></i>
          <div class="modes sun">${["不偏移", "正交", "极坐标"].map((m) => html`<label><input type="radio" name="mode" .checked=${this.mode === m} @change=${() => (this.mode = m)}>${m}</label>`)}</div>
          <i class="sep"></i>${this.number("dx", "X =")}${this.number("dy", "Y =")}</div>
        ${this.drawing()}
        <div class="hint"><button>动态输入</button></div>
        <div class="acts sun"><button class="push-btn wide">从${mix("CAD")}选择截面图</button><button class="push-btn wider">在${mix("CAD")}中绘制截面图</button>
          <button class="push-btn">确定</button><button class="push-btn">取消</button></div>
        <div class="status sun"><span class="cell w148">坐标 ${mix("(X: 932 Y: 563)")}</span><span class="cell w148">命令：无</span><span class="cell grow corner">绘图结束</span></div>
      </section>

      <section class="win dialog" role="dialog" aria-label="定义网格">
        <div class="top"><span>定义网格</span><button aria-label="关闭">${pic(svg`<path d="M1 1L11 11M11 1L1 11" stroke="#111" stroke-width="1.200"/>`, 12, 12, "0 0 12 12")}</button></div>
        <form class="sun" @submit=${(e: Event) => e.preventDefault()}>
          <fieldset><legend><label for="horizontal">${mix("水平方向间距(mm)=>间距*个数,间距,间距*个数,间距,...")}</label></legend>
            <textarea id="horizontal" spellcheck="false">500,200,200</textarea></fieldset>
          <fieldset><legend><label for="vertical">${mix("垂直方向间距(mm)=>间距*个数,间距,间距*个数,间距,...")}</label></legend>
            <textarea id="vertical" spellcheck="false">100,100,100</textarea></fieldset>
          <div class="reply"><button class="push-btn">确定</button><button class="push-btn">取消</button></div>
        </form>
      </section>

      <div class="ball">70</div>
      <div class="ime">${icon("sogou", 28)}${icon("zhong")}${icon("comma")}${icon("smile")}${icon("mic")}${icon("keys")}${icon("person")}${icon("shirt")}${icon("tiles")}</div>
      <div class="mark mark-a"></div>
      <div class="mark mark-b"></div>
    `;
  }
}
